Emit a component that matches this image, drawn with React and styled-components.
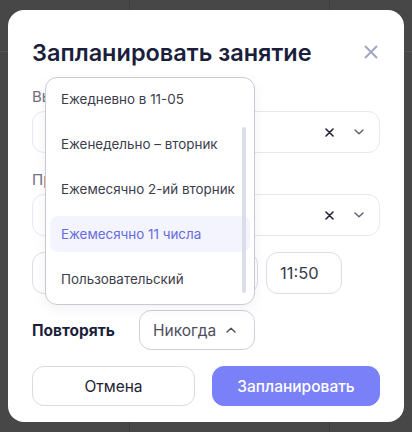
import React from "react";
import styled, { createGlobalStyle } from "styled-components";

const GlobalStyle = createGlobalStyle`
  html, body { margin: 0; padding: 0; }
  body {
    font-family: Inter, "Noto Sans", "Liberation Sans", sans-serif;
    -webkit-font-smoothing: antialiased;
  }
  * { box-sizing: border-box; }
`;

/* dimmed calendar behind the dialog */
const Backdrop = styled.div`
  width: 412px;
  height: 432px;
  padding: 10px 8px;
  background-color: #474747;
  background-image:
    linear-gradient(to right, transparent 129px, #3d3d3d 129px, #3d3d3d 130px, transparent 130px),
    linear-gradient(to right, transparent 329px, #3d3d3d 329px, #3d3d3d 330px, transparent 330px),
    linear-gradient(to bottom, transparent 51px, #545454 51px, #545454 52px, transparent 52px);
`;

const Modal = styled.div`
  height: 412px;
  background: #ffffff;
  border-radius: 16px;
  padding: 26px 24px 16px;
  display: flex;
  flex-direction: column;
  gap: 16px;
`;

const Header = styled.div`
  height: 32px;
  margin-bottom: 2px;
  display: flex;
  align-items: center;
  justify-content: space-between;
`;

const Title = styled.h2`
  margin: 0;
  font-size: 23.5px;
  font-weight: 600;
  color: #1b1f3b;
  line-height: 32px;
  padding-top: 2px;
`;

const CloseButton = styled.button`
  border: 0;
  background: none;
  padding: 0;
  margin-right: 2px;
  width: 14px;
  height: 14px;
  display: flex;
  color: #a3a6c4;
  cursor: pointer;
`;

const FieldGroup = styled.div`
  display: flex;
  flex-direction: column;
  gap: 3px;
`;

const Label = styled.div`
  font-size: 15px;
  line-height: 22px;
  color: #6f7080;
`;

const SelectBox = styled.div`
  height: 42px;
  border: 1px solid #e7e8f0;
  border-radius: 12px;
  display: flex;
  align-items: center;
  justify-content: flex-end;
  gap: 20px;
  padding-right: 15px;
`;

const IconSlot = styled.span`
  display: flex;
  color: ${(p) => p.$color};
`;

const DateRow = styled.div`
  display: flex;
  gap: 8px;
`;

const InputBox = styled.div`
  width: ${(p) => p.$width}px;
  height: 42px;
  border: 1px solid #dcdde6;
  border-radius: 12px;
  display: flex;
  align-items: center;
  padding-left: 13px;
  font-size: 16.5px;
  color: #3a3b4a;
`;

const RepeatRow = styled.div`
  display: flex;
  align-items: center;
  height: 40px;
`;

const RepeatLabel = styled.div`
  width: 107px;
  font-size: 15.5px;
  font-weight: 700;
  color: #1b1f3b;
`;

const RepeatAnchor = styled.div`
  position: relative;
`;

const RepeatButton = styled.button`
  width: 116px;
  height: 40px;
  border: 1px solid #cfd0dc;
  border-radius: 12px;
  background: #fff;
  display: flex;
  align-items: center;
  gap: 10px;
  padding: 0 0 0 13px;
  font-family: inherit;
  font-size: 15.5px;
  color: #4d4e5e;
`;

const Dropdown = styled.div`
  position: absolute;
  right: 0;
  bottom: calc(100% + 5px);
  width: 210px;
  height: 228px;
  border: 1px solid #c9cad6;
  border-radius: 12px;
  background: #fff;
  padding: 3px 4px;
  display: flex;
  flex-direction: column;
  gap: 9px;
  overflow: hidden;
  box-shadow: 0 4px 14px rgba(30, 32, 60, 0.06);
`;

const Option = styled.div`
  flex: none;
  height: 36px;
  display: flex;
  align-items: center;
  padding-left: 11px;
  border-radius: 8px;
  font-size: 13.4px;
  white-space: nowrap;
  color: ${(p) => (p.$active ? "#666be0" : "#3c3d4c")};
  background: ${(p) => (p.$active ? "#f3f4fd" : "transparent")};
`;

const ScrollThumb = styled.div`
  position: absolute;
  right: 8px;
  top: 49px;
  width: 4px;
  height: 166px;
  border-radius: 2px;
  background: #dcdde8;
`;

const Footer = styled.div`
  display: grid;
  grid-template-columns: 163px 1fr;
  gap: 17px;
`;

const Button = styled.button`
  height: 40px;
  border-radius: 12px;
  font-family: inherit;
  font-size: 15.5px;
  font-weight: ${(p) => (p.$primary ? 500 : 400)};
  color: ${(p) => (p.$primary ? "#ffffff" : "#1f2333")};
  background: ${(p) => (p.$primary ? "#7a80f7" : "#ffffff")};
  border: 1px solid ${(p) => (p.$primary ? "#7a80f7" : "#d9dae4")};
`;

const Cross = ({ size = 9, stroke = 1.6 }) => (
  <svg width={size} height={size} viewBox="0 0 9 9" fill="none">
    <path d="M1 1L8 8M8 1L1 8" stroke="currentColor" strokeWidth={stroke} strokeLinecap="round" />
  </svg>
);

const Chevron = ({ up }) => (
  <svg width="10" height="6" viewBox="0 0 10 6" fill="none">
    <path
      d={up ? "M1 5L5 1.2L9 5" : "M1 1L5 4.8L9 1"}
      stroke="currentColor"
      strokeWidth="1.4"
      strokeLinecap="round"
      strokeLinejoin="round"
    />
  </svg>
);

const options = [
  "Ежедневно в 11-05",
  "Еженедельно – вторник",
  "Ежемесячно 2-ий вторник",
  "Ежемесячно 11 числа",
  "Пользовательский",
];

export default function App() {
  return (
    <>
      <GlobalStyle />
      <Backdrop>
        <Modal>
          <Header>
            <Title>Запланировать занятие</Title>
            <CloseButton aria-label="Закрыть">
              <svg width="14" height="14" viewBox="0 0 14 14" fill="none">
                <path d="M1.5 1.5L12.5 12.5M12.5 1.5L1.5 12.5" stroke="currentColor" strokeWidth="2" strokeLinecap="round" />
              </svg>
            </CloseButton>
          </Header>

          <FieldGroup>
            <Label>Выберите ученика</Label>
            <SelectBox>
              <IconSlot $color="#22253a"><Cross /></IconSlot>
              <IconSlot $color="#5d5f70"><Chevron /></IconSlot>
            </SelectBox>
          </FieldGroup>

          <FieldGroup>
            <Label>Предмет</Label>
            <SelectBox>
              <IconSlot $color="#22253a"><Cross /></IconSlot>
              <IconSlot $color="#5d5f70"><Chevron /></IconSlot>
            </SelectBox>
          </FieldGroup>

          <DateRow>
            <InputBox $width={226} />
            <InputBox $width={76}>11:50</InputBox>
          </DateRow>

          <RepeatRow>
            <RepeatLabel>Повторять</RepeatLabel>
            <RepeatAnchor>
              <RepeatButton>
                Никогда
                <IconSlot $color="#4d4e5e"><Chevron up /></IconSlot>
              </RepeatButton>
              <Dropdown>
                {options.map((o, i) => (
                  <Option key={o} $active={i === 3}>{o}</Option>
                ))}
                <ScrollThumb />
              </Dropdown>
            </RepeatAnchor>
          </RepeatRow>

          <Footer>
            <Button>Отмена</Button>
            <Button $primary>Запланировать</Button>
          </Footer>
        </Modal>
      </Backdrop>
    </>
  );
}
